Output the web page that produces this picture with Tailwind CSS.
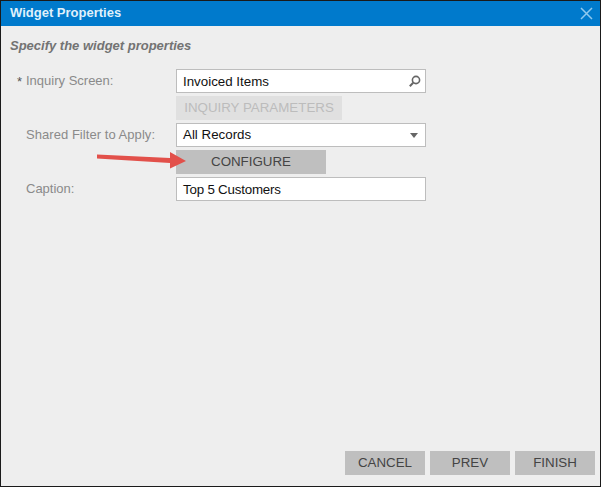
<!DOCTYPE html>
<html lang="en">

<head>
  <meta charset="UTF-8">
  <title>Widget Properties</title>
  <script src="https://cdn.jsdelivr.net/npm/@tailwindcss/browser@4"></script>
</head>

<body class="bg-[#eeeeee]">
  <div class="relative w-[601px] h-[487px] flex flex-col border border-[#1a1a1a] bg-[#eeeeee] font-['Liberation_Sans',sans-serif] overflow-hidden">
    <!-- Title bar -->
    <div class="h-[25px] shrink-0 bg-[#007acc] flex items-center justify-between pl-[9px] pr-[7px]">
      <span class="font-bold text-[13px] text-[#dff0fb] -mt-[2px]">Widget Properties</span>
      <svg class="w-[13px] h-[13px]" viewBox="0 0 13 13" fill="none" stroke="#8fc9ee" stroke-width="1.5">
        <path d="M1 1l11 11M12 1L1 12" />
      </svg>
    </div>

    <div class="flex-1 flex flex-col">
      <p class="mt-[12px] ml-[9px] h-[16px] leading-[16px] font-bold italic text-[13px] text-[#737373]">Specify the widget properties</p>

      <!-- Form -->
      <div class="mt-[15px] flex flex-col gap-[3px]">
        <div class="flex items-center h-[24px]">
          <span class="w-[25px] pl-[16px] text-[13px] text-[#555] leading-none">*</span>
          <span class="w-[150px] text-[13px] text-[#8a8a8a]">Inquiry Screen:</span>
          <div class="w-[250px] h-[24px] bg-white border border-[#bdbdbd] flex items-center justify-between pl-[6px] pr-[3px]">
            <span class="text-[13.33px] text-[#111] mt-[1px]">Invoiced Items</span>
            <svg class="w-[14px] h-[14px]" viewBox="0 0 14 14" fill="none" stroke="#666">
              <circle cx="8" cy="6" r="3.6" stroke-width="1.6" />
              <path d="M5.2 8.8L1.8 12.2" stroke-width="2" />
            </svg>
          </div>
        </div>

        <div class="flex h-[24px] pl-[175px]">
          <div class="w-[166px] h-[24px] bg-[#e0e0e0] flex items-center justify-center text-[13.33px] text-[#bcbcbc]">INQUIRY PARAMETERS</div>
        </div>

        <div class="flex items-center h-[24px]">
          <span class="w-[175px] pl-[25px] text-[13px] tracking-[0.05px] text-[#8a8a8a]">Shared Filter to Apply:</span>
          <div class="w-[250px] h-[24px] bg-white border border-[#bdbdbd] flex items-center justify-between pl-[6px] pr-[7px]">
            <span class="text-[13.33px] text-[#111]">All Records</span>
            <svg class="w-[8px] h-[5px]" viewBox="0 0 8 5" fill="#666">
              <path d="M0 0h8L4 5z" />
            </svg>
          </div>
        </div>

        <div class="flex h-[24px] pl-[175px]">
          <div class="w-[150px] h-[24px] bg-[#bfbfbf] flex items-center justify-center text-[13.33px] text-[#444]">CONFIGURE</div>
        </div>

        <div class="flex items-center h-[24px]">
          <span class="w-[175px] pl-[25px] text-[13px] text-[#8a8a8a]">Caption:</span>
          <div class="w-[250px] h-[24px] bg-white border border-[#bdbdbd] flex items-center pl-[6px]">
            <span class="text-[13.33px] tracking-[-0.2px] text-[#111] mt-[1px]">Top 5 Customers</span>
          </div>
        </div>
      </div>

      <!-- Footer buttons -->
      <div class="mt-auto mb-[11px] mr-[5px] flex justify-end gap-[5px]">
        <div class="w-[80px] h-[24px] bg-[#bfbfbf] flex items-center justify-center text-[13.33px] text-[#444]">CANCEL</div>
        <div class="w-[80px] h-[24px] bg-[#bfbfbf] flex items-center justify-center text-[13.33px] text-[#444]">PREV</div>
        <div class="w-[80px] h-[24px] bg-[#bfbfbf] flex items-center justify-center text-[13.33px] text-[#444]">FINISH</div>
      </div>
    </div>

    <!-- Red callout arrow -->
    <svg class="absolute left-[95px] top-[148px] w-[92px] h-[24px]" viewBox="0 0 92 24" fill="#e2504a">
      <path d="M1 5.5L74 9V3L90 12L74 19.5V14L1 9.5z" />
    </svg>
  </div>
</body>

</html>
